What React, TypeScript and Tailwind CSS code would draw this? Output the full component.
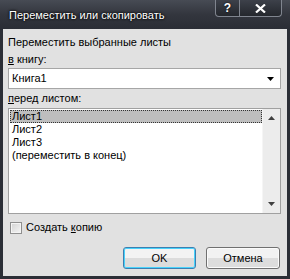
export default function App() {
  return (
    <div className="w-[290px] h-[279px] bg-[#2b2e36] flex flex-col font-['Liberation_Sans',Arial,sans-serif] text-[11px] leading-[13px] text-black select-none">
      <div className="h-[29px] shrink-0 flex items-start justify-between bg-gradient-to-b from-[#474b54] via-[#33363e] to-[#2a2d35] pl-[9px] pr-[8px]">
        <div className="pt-[9px] text-white [text-shadow:0_0_3px_#000,0_0_2px_#000]">Переместить или скопировать</div>
        <div className="flex">
          <div className="w-[25px] h-[17px] rounded-bl-[4px] border border-t-0 border-[#80858f] bg-gradient-to-b from-[#3d414a] to-[#24272d] flex items-center justify-center text-white font-bold text-[12px] [text-shadow:0_0_2px_#000]">?</div>
          <div className="w-[42px] h-[17px] rounded-br-[4px] border border-t-0 border-l-0 border-[#80858f] bg-gradient-to-b from-[#3d414a] to-[#24272d] flex items-center justify-center">
            <svg width="11" height="9" viewBox="0 0 11 9">
              <path d="M1 0.5 L10 8.5 M10 0.5 L1 8.5" stroke="#fff" strokeWidth="2.2" />
            </svg>
          </div>
        </div>
      </div>
      <div className="flex-1 mx-[3px] mb-[3px] bg-[#e1e1e1] flex flex-col pl-[5px] pr-[6px] pt-[7px]">
        <div>Переместить выбранные листы</div>
        <div className="mt-[4px]"><span className="underline">в</span> книгу:</div>
        <div className="mt-[2px] h-[21px] border border-[#a6a6a6] bg-white flex items-center justify-between pl-[3px] pr-[6px]">
          <span>Книга1</span>
          <svg width="7" height="4" viewBox="0 0 7 4"><path d="M0 0 H7 L3.5 4 Z" fill="#000" /></svg>
        </div>
        <div className="mt-[3px]"><span className="underline">п</span>еред листом:</div>
        <div className="mt-[3px] h-[106px] border border-[#a0a0a0] bg-white flex">
          <div className="flex-1 pl-[1px] pt-[1px] flex flex-col">
            <div className="h-[13px] bg-[#bebebe] border border-dotted border-[#333] pl-[1px] flex items-center">Лист1</div>
            <div className="h-[13px] pl-[2px] flex items-center">Лист2</div>
            <div className="h-[13px] pl-[2px] flex items-center">Лист3</div>
            <div className="h-[13px] pl-[2px] flex items-center">(переместить в конец)</div>
          </div>
          <div className="w-[18px] bg-[#ececec] border-l border-[#f5f5f5] flex flex-col justify-between items-center py-[7px]">
            <svg width="7" height="4" viewBox="0 0 7 4"><path d="M0 4 H7 L3.5 0 Z" fill="#404040" /></svg>
            <svg width="7" height="4" viewBox="0 0 7 4"><path d="M0 0 H7 L3.5 4 Z" fill="#404040" /></svg>
          </div>
        </div>
        <div className="mt-[7px] flex items-center pl-[2px]">
          <div className="w-[12px] h-[12px] border border-[#8f8f8f] bg-gradient-to-br from-[#d2d2d2] to-[#f6f6f6] shadow-[inset_0_0_0_1px_#f4f4f4]" />
          <span className="ml-[4px]">Создать <span className="underline">к</span>опию</span>
        </div>
        <div className="mt-[13px] flex justify-end gap-[10px] pr-[1px]">
          <div className="w-[73px] h-[22px] rounded-[3px] border border-[#3c7fb1] shadow-[inset_0_0_0_1px_#48d2fb] bg-gradient-to-b from-[#f3f3f3] from-50% to-[#dcdcdc] to-50% flex items-center justify-center">OK</div>
          <div className="w-[74px] h-[22px] rounded-[3px] border border-[#707070] shadow-[inset_0_0_0_1px_#fbfbfb] bg-gradient-to-b from-[#f2f2f2] from-50% to-[#dddddd] to-50% flex items-center justify-center">Отмена</div>
        </div>
      </div>
    </div>
  );
}
